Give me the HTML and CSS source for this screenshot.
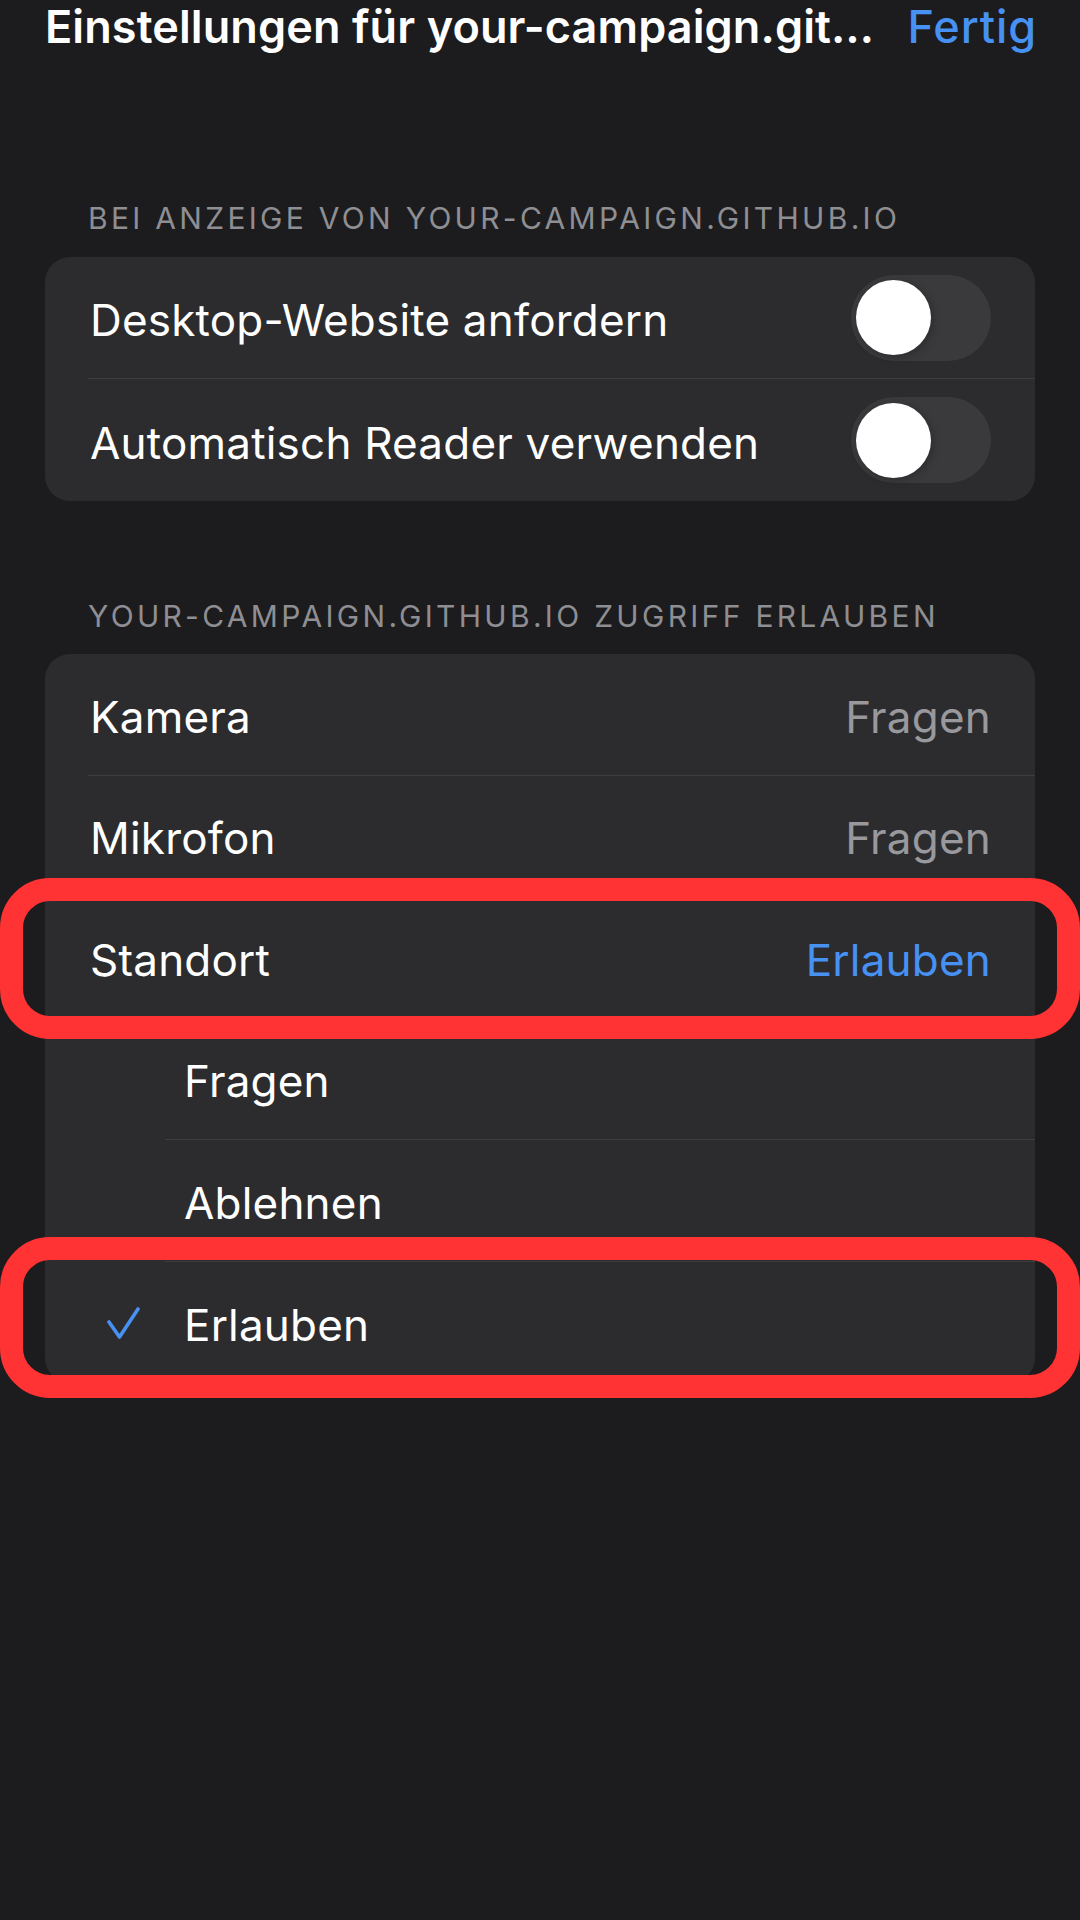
FILE: index.html
```html
<!DOCTYPE html>
<html lang="de">
<head>
<meta charset="utf-8">
<link rel="stylesheet" href="styles.css">
</head>
<body>
<header class="nav">
  <h1 class="nav-title">Einstellungen für your-campaign.git…</h1>
  <span class="nav-done">Fertig</span>
</header>

<section class="group group-first">
  <h2 class="group-title">BEI ANZEIGE VON YOUR-CAMPAIGN.GITHUB.IO</h2>
  <div class="card">
    <div class="row row-tall">
      <div class="row-inner">
        <span class="label">Desktop-Website anfordern</span>
        <span class="toggle"><span class="knob"></span></span>
      </div>
    </div>
    <div class="row row-tall">
      <div class="row-inner last">
        <span class="label">Automatisch Reader verwenden</span>
        <span class="toggle"><span class="knob"></span></span>
      </div>
    </div>
  </div>
</section>

<section class="group group-second">
  <h2 class="group-title">YOUR-CAMPAIGN.GITHUB.IO ZUGRIFF ERLAUBEN</h2>
  <div class="card">
    <div class="row">
      <div class="row-inner">
        <span class="label">Kamera</span>
        <span class="value">Fragen</span>
      </div>
    </div>
    <div class="row">
      <div class="row-inner">
        <span class="label">Mikrofon</span>
        <span class="value">Fragen</span>
      </div>
    </div>
    <div class="row">
      <div class="row-inner">
        <span class="label">Standort</span>
        <span class="value value-blue">Erlauben</span>
      </div>
      <div class="highlight highlight-a"></div>
    </div>
    <div class="row sub">
      <span class="check-slot"></span>
      <div class="row-inner sub-inner">
        <span class="label">Fragen</span>
      </div>
    </div>
    <div class="row sub">
      <span class="check-slot"></span>
      <div class="row-inner sub-inner">
        <span class="label">Ablehnen</span>
      </div>
    </div>
    <div class="row sub">
      <span class="check-slot">
        <svg class="check" width="34" height="34" viewBox="0 0 34 34">
          <path d="M3 16 L13.5 31 L32 3" fill="none" stroke="#4791f2" stroke-width="3.6" stroke-linecap="round" stroke-linejoin="round"/>
        </svg>
      </span>
      <div class="row-inner sub-inner last">
        <span class="label">Erlauben</span>
      </div>
      <div class="highlight highlight-b"></div>
    </div>
  </div>
</section>
</body>
</html>
```

FILE: styles.css
```css
html, body {
  margin: 0;
  padding: 0;
}
body {
  width: 1080px;
  height: 1920px;
  background: #1c1c1e;
  font-family: Inter, "Noto Sans", "Liberation Sans", sans-serif;
  color: #ffffff;
  overflow: hidden;
}

.nav {
  display: flex;
  justify-content: space-between;
  align-items: flex-start;
  padding: 0 43px 0 45px;
  height: 54px;
}
.nav-title {
  margin: 0;
  font-size: 45px;
  line-height: 54px;
  font-weight: 600;
  letter-spacing: 0.1px;
  color: #ffffff;
}
.nav-done {
  font-size: 45px;
  line-height: 54px;
  font-weight: 500;
  color: #4791f2;
  letter-spacing: 0.9px;
}

.group {
  padding: 0 45px;
}
.group-first {
  margin-top: 146px;
}
.group-second {
  margin-top: 97px;
}
.group-title {
  margin: 0 0 21px 0;
  padding-left: 43px;
  font-size: 30px;
  line-height: 36px;
  font-weight: 400;
  color: #8e8e93;
  letter-spacing: 3.3px;
}
.group-second .group-title {
  margin-bottom: 20px;
}

.card {
  background: #2c2c2e;
  border-radius: 25px;
}

.row {
  position: relative;
  display: flex;
  padding-left: 43px;
  height: 121.5px;
}
.row-tall {
  height: 122px;
}
.row-inner {
  flex: 1;
  display: flex;
  align-items: center;
  justify-content: space-between;
  padding-right: 44px;
  border-bottom: 1px solid #3d3d40;
}
.row-inner.last {
  border-bottom: none;
}
.label {
  font-size: 44px;
  line-height: 52px;
  font-weight: 400;
  letter-spacing: 0.2px;
  padding-left: 2px;
  padding-top: 5px;
}
.value {
  font-size: 44px;
  line-height: 52px;
  color: #98989d;
  letter-spacing: 0.2px;
  padding-top: 5px;
}
.value-blue {
  color: #4791f2;
}

.check-slot {
  width: 77px;
  display: flex;
  align-items: center;
  padding-left: 18px;
  box-sizing: border-box;
}
.check {
  display: block;
  margin-top: 2px;
}
.sub-inner {
  padding-left: 17px;
}

.toggle {
  width: 140px;
  height: 86px;
  border-radius: 43px;
  background: #3a3a3d;
  display: flex;
  align-items: center;
  padding-left: 5px;
  box-sizing: border-box;
}
.knob {
  width: 75px;
  height: 75px;
  border-radius: 50%;
  background: #ffffff;
  box-shadow: 2px 2px 8px rgba(0, 0, 0, 0.25);
}

.highlight {
  position: absolute;
  left: -45px;
  right: -45px;
  height: 161px;
  box-sizing: border-box;
  border: 23px solid #ff3333;
  border-radius: 50px;
  pointer-events: none;
}
.highlight-a {
  top: -19px;
}
.highlight-b {
  top: -25px;
}
```
